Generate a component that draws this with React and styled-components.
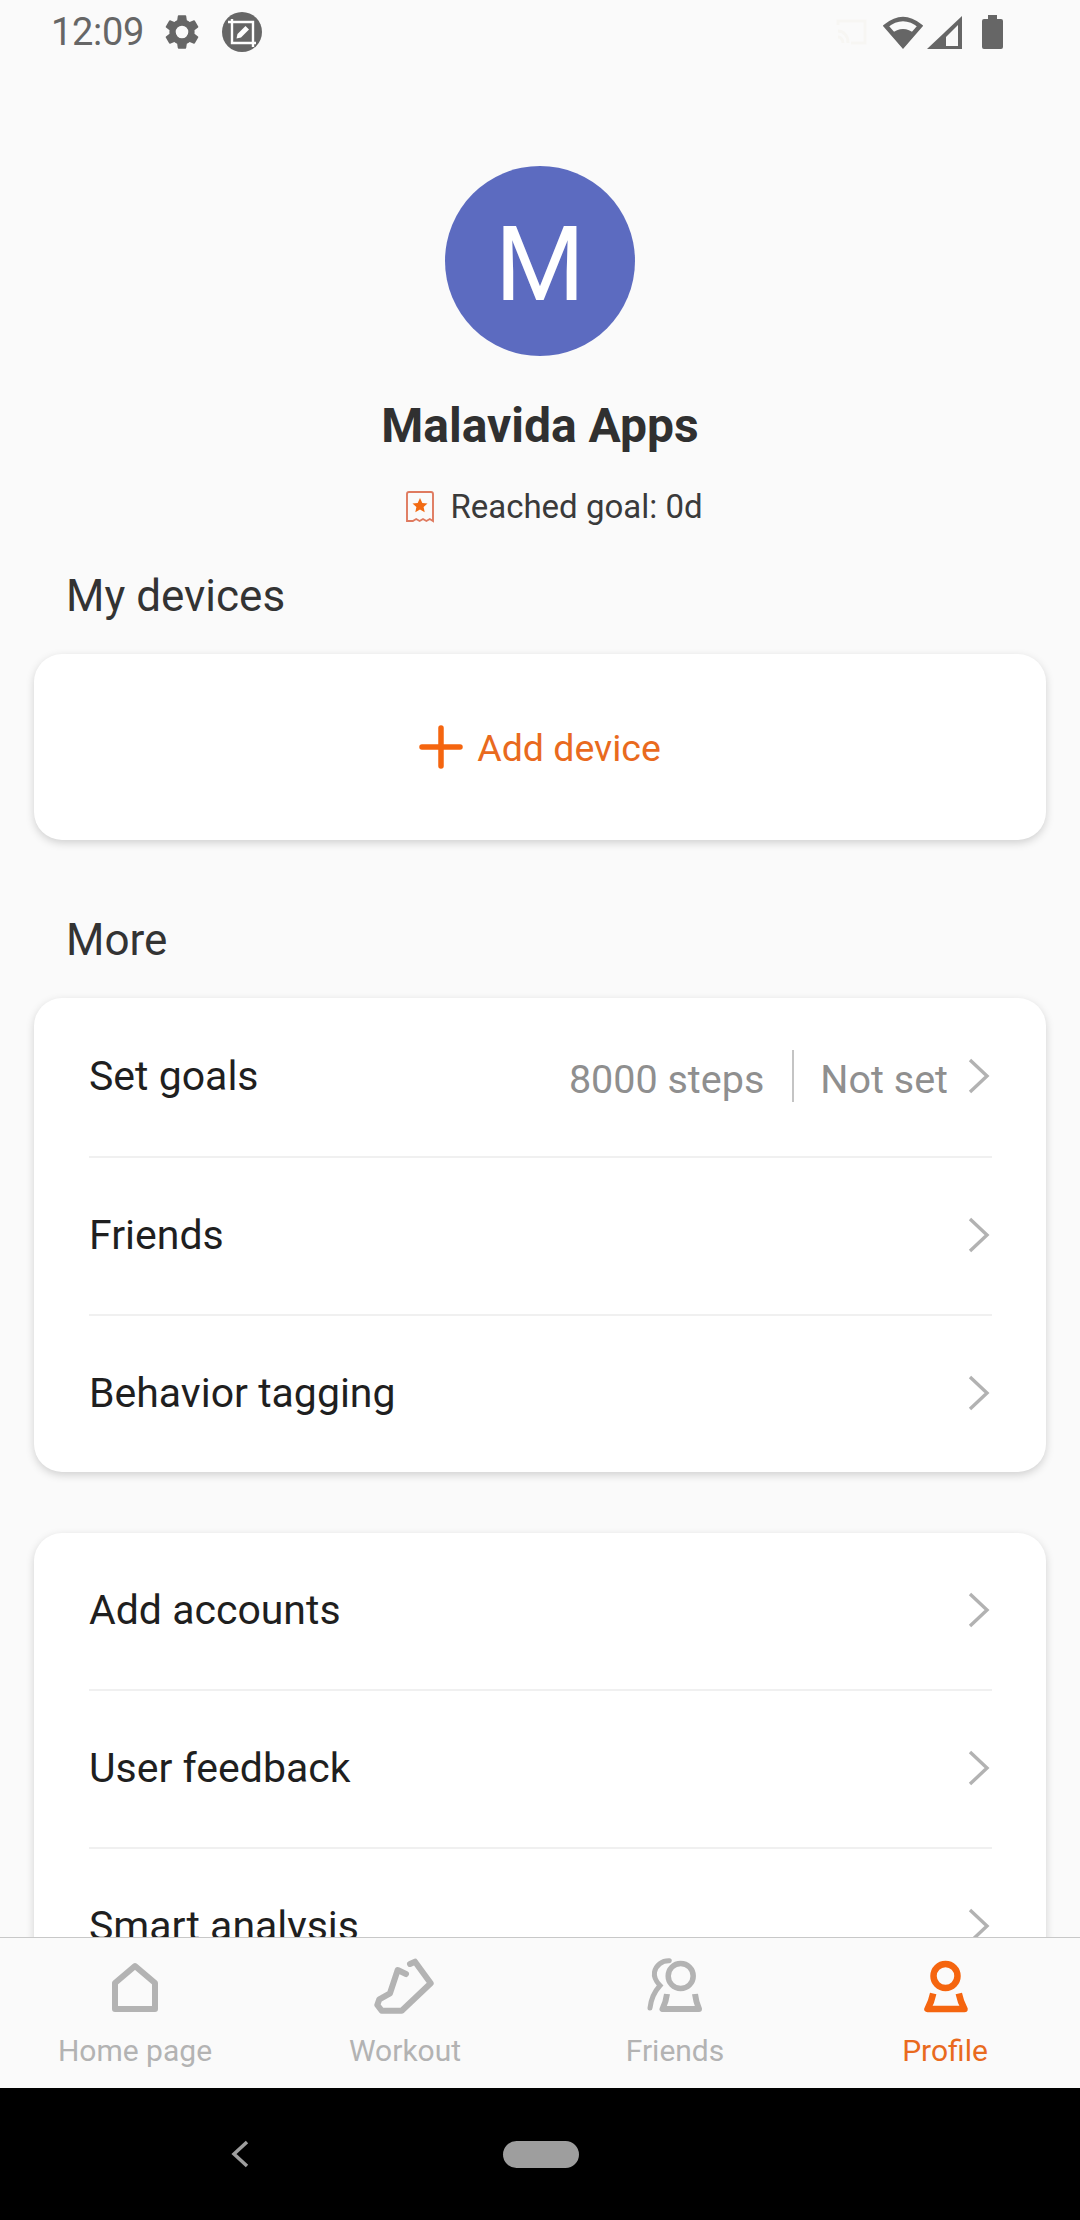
import React from "react";
import styled, { createGlobalStyle } from "styled-components";

const GlobalStyle = createGlobalStyle`
  html, body { margin: 0; padding: 0; background: #fafafa; }
  * { box-sizing: border-box; }
`;

const Screen = styled.div`
  width: 1080px;
  height: 2220px;
  display: flex;
  flex-direction: column;
  overflow: hidden;
  background: #fafafa;
  font-family: Roboto, "Liberation Sans", sans-serif;
  color: #1f1f1f;
`;

const StatusBar = styled.div`
  height: 66px;
  flex: none;
  display: flex;
  align-items: center;
  padding: 0 77px 2px 51px;
  color: #666;
`;
const Clock = styled.span`
  font-size: 38px;
  line-height: 1;
  width: 110px;
  letter-spacing: -0.3px;
`;
const StatusLeft = styled.div`
  display: flex;
  align-items: center;
  gap: 19px;
`;
const StatusRight = styled.div`
  margin-left: auto;
  display: flex;
  align-items: center;
  gap: 4px;
`;
const CastSvg = styled.svg`
  margin-right: 11px;
`;
const BatterySvg = styled.svg`
  margin-left: 16px;
`;

const Content = styled.div`
  flex: 1;
  min-height: 0;
  overflow: hidden;
  padding: 100px 34px 0;
`;
const ProfileHead = styled.div`
  display: flex;
  flex-direction: column;
  align-items: center;
`;
const Avatar = styled.div`
  width: 190px;
  height: 190px;
  border-radius: 50%;
  background: #5c6bc0;
  color: #fff;
  font-size: 103px;
  line-height: 198px;
  text-align: center;
`;
const Name = styled.div`
  margin-top: 40px;
  font-size: 48px;
  line-height: 60px;
  font-weight: 700;
  color: #303030;
`;
const GoalRow = styled.div`
  margin-top: 30px;
  padding-left: 28px;
  display: flex;
  align-items: center;
  gap: 15px;
  font-size: 33px;
  line-height: 42px;
  color: #3a3a3a;
`;
const SectionTitle = styled.div`
  padding-left: 32px;
  font-size: 44px;
  line-height: 56px;
  color: #333;
  margin: ${(p) => p.$top}px 0 30px;
`;
const Card = styled.div`
  background: #fff;
  border-radius: 28px;
  box-shadow: 0 3px 9px rgba(0, 0, 0, 0.17);
`;
const AddCard = styled(Card)`
  height: 186px;
  display: flex;
  align-items: center;
  justify-content: center;
  gap: 14px;
  color: #e96a1e;
  font-size: 37.5px;
`;
const AddLabel = styled.span`
  padding-top: 2px;
`;
const ListCard = styled(Card)`
  padding: 0 54px 0 55px;
  margin-top: ${(p) => p.$top || 0}px;
  & > :first-child {
    height: ${(p) => p.$firstRow || 158}px;
  }
`;
const Row = styled.div`
  height: 158px;
  display: flex;
  align-items: center;
  padding-bottom: 2px;
  font-size: 41px;
  color: #1f1f1f;
  & + & {
    border-top: 2px solid #f0f0f0;
  }
`;
const RowValue = styled.div`
  margin-left: auto;
  display: flex;
  align-items: center;
  font-size: 39.5px;
  color: #8f8f8f;
`;
const ValueText = styled.span`
  padding-top: 6px;
`;
const ValueDivider = styled.span`
  width: 2px;
  height: 52px;
  background: #c4c4c4;
  margin: 0 26px 0 28px;
`;
const Chevron = styled.svg`
  flex: none;
  margin-left: ${(p) => (p.$inline ? "20px" : "auto")};
  margin-right: 2px;
`;

const TabBar = styled.div`
  height: 151px;
  flex: none;
  display: grid;
  grid-template-columns: repeat(4, 1fr);
  background: #fafafa;
  border-top: 1px solid #c8c8c8;
  position: relative;
`;
const Tab = styled.div`
  display: flex;
  flex-direction: column;
  align-items: center;
  padding-top: 20px;
  color: ${(p) => (p.$active ? "#e96a1e" : "#b3b3b3")};
  font-size: 30px;
`;
const TabIcon = styled.svg`
  display: block;
`;
const TabLabel = styled.span`
  margin-top: 14px;
  line-height: 38px;
`;

const NavBar = styled.div`
  height: 132px;
  flex: none;
  background: #000;
  display: flex;
  align-items: center;
  padding: 0 0 0 231px;
`;
const HomePill = styled.div`
  width: 76px;
  height: 27px;
  border-radius: 14px;
  background: #9e9e9e;
  margin-left: 254px;
`;

const GearIcon = () => (
  <svg width="42" height="42" viewBox="0 0 24 24" fill="#666">
    <path d="M19.14 12.94c.04-.3.06-.61.06-.94s-.02-.64-.07-.94l2.03-1.58a.49.49 0 0 0 .12-.61l-1.92-3.32a.49.49 0 0 0-.59-.22l-2.39.96a7 7 0 0 0-1.62-.94l-.36-2.54a.48.48 0 0 0-.48-.41h-3.84a.48.48 0 0 0-.47.41l-.36 2.54c-.59.24-1.13.57-1.62.94l-2.39-.96a.49.49 0 0 0-.59.22L2.74 8.87a.48.48 0 0 0 .12.61l2.03 1.58c-.05.3-.09.63-.09.94s.02.64.07.94l-2.03 1.58a.49.49 0 0 0-.12.61l1.92 3.32c.12.22.37.29.59.22l2.39-.96c.5.38 1.03.7 1.62.94l.36 2.54c.05.24.24.41.48.41h3.84c.24 0 .44-.17.47-.41l.36-2.54c.59-.24 1.13-.56 1.62-.94l2.39.96c.22.08.47 0 .59-.22l1.92-3.32a.48.48 0 0 0-.12-.61l-2.01-1.58zM12 15.6A3.6 3.6 0 1 1 12 8.4a3.6 3.6 0 0 1 0 7.2z" />
  </svg>
);

const ScreenshotEditIcon = () => (
  <svg width="40" height="40" viewBox="0 0 40 40">
    <circle cx="20" cy="20" r="20" fill="#666" />
    <path d="M10 7v24h24M6 10h25v25" fill="none" stroke="#fff" strokeWidth="2.4" />
    <path d="M14.5 26.5l1-4.5 8-8 3.5 3.5-8 8z" fill="#fff" />
  </svg>
);

const CastIcon = () => (
  <CastSvg width="33" height="28" viewBox="0 0 33 28">
    <path d="M3 7V3h27v22H16M3 13c6 0 10 5 10 12M3 19c3 0 5 3 5 6" fill="none" stroke="#f7f6f3" strokeWidth="3" />
  </CastSvg>
);

const WifiIcon = () => (
  <svg width="40" height="34" viewBox="0 0 40 34">
    <path d="M20 30.5L3 11Q20 -3 37 11z" fill="none" stroke="#666" strokeWidth="4.5" />
    <path d="M20 33L8 19Q20 9 32 19z" fill="#666" />
  </svg>
);

const SignalIcon = () => (
  <svg width="35" height="33" viewBox="0 0 35 33">
    <path d="M35 0v33H0z" fill="#666" />
    <path d="M31 9v21H19V21z" fill="#fafafa" />
  </svg>
);

const BatteryIcon = () => (
  <BatterySvg width="21" height="34" viewBox="0 0 21 34">
    <path d="M6 0h9v4h4a2 2 0 0 1 2 2v26a2 2 0 0 1-2 2H2a2 2 0 0 1-2-2V6a2 2 0 0 1 2-2h4z" fill="#666" />
  </BatterySvg>
);

const GoalIcon = () => (
  <svg width="30" height="34" viewBox="0 0 30 34">
    <path d="M2 4a2 2 0 0 1 2-2h22a2 2 0 0 1 2 2v27l-3.2-2-3.4 2-3.4-2-3.4 2-3.4-2-3.4 2L2 31z" fill="none" stroke="#df7a5f" strokeWidth="1.9" />
    <path d="M15 8l2.3 4.9 5.2.6-3.9 3.5 1.1 5.2-4.7-2.7-4.7 2.7 1.1-5.2-3.9-3.5 5.2-.6z" fill="#f26a12" />
  </svg>
);

const PlusIcon = () => (
  <svg width="44" height="44" viewBox="0 0 44 44">
    <path d="M22 3v38M3 22h38" stroke="#f5650f" strokeWidth="5.5" strokeLinecap="round" />
  </svg>
);

const ChevronIcon = ({ inline }) => (
  <Chevron $inline={inline} width="22" height="36" viewBox="0 0 22 36">
    <path d="M2 2l17 16L2 34" fill="none" stroke="#b2b2b2" strokeWidth="3.4" />
  </Chevron>
);

const HomeIcon = () => (
  <TabIcon width="64" height="60" viewBox="0 0 64 60">
    <path d="M32 8l20 17v26H12V25z" fill="none" stroke="#b3b3b3" strokeWidth="6" strokeLinejoin="round" />
  </TabIcon>
);

const ShoeIcon = () => (
  <TabIcon width="64" height="60" viewBox="0 0 64 60">
    <path
      d="M37 6l5-2.3L57.7 25.3 28.7 52.7H8.7L4.3 47l2-5.7L17 35.3 24.7 12 33 16"
      fill="none"
      stroke="#b3b3b3"
      strokeWidth="6"
      strokeLinejoin="round"
      strokeLinecap="round"
    />
  </TabIcon>
);

const FriendsIcon = () => (
  <TabIcon width="64" height="60" viewBox="0 0 64 60">
    <circle cx="37.7" cy="18" r="12.5" fill="none" stroke="#b3b3b3" strokeWidth="5.5" />
    <path d="M26.3 2.7C19 2.5 13 7 11.5 14c-.8 5 2 10 5.5 13.5C12 33 8 41 7 50" fill="none" stroke="#b3b3b3" strokeWidth="5" strokeLinecap="round" />
    <path d="M24 36Q23 44 19.5 51H56Q53 44 52 36" fill="none" stroke="#b3b3b3" strokeWidth="6" strokeLinejoin="round" />
  </TabIcon>
);

const ProfileIcon = () => (
  <TabIcon width="64" height="60" viewBox="0 0 64 60">
    <circle cx="32.5" cy="18" r="12" fill="none" stroke="#f5650f" strokeWidth="6.5" />
    <path d="M20.2 35.5Q18.5 44 14.5 51H51.5Q47.5 44 45.8 35.5" fill="none" stroke="#f5650f" strokeWidth="6.5" strokeLinejoin="round" />
  </TabIcon>
);

const BackIcon = () => (
  <svg width="18" height="28" viewBox="0 0 18 28">
    <path d="M16 2L3 14l13 12" fill="none" stroke="#9e9e9e" strokeWidth="3.5" />
  </svg>
);

const tabs = [
  { label: "Home page", Icon: HomeIcon },
  { label: "Workout", Icon: ShoeIcon },
  { label: "Friends", Icon: FriendsIcon },
  { label: "Profile", Icon: ProfileIcon, active: true },
];

export default function App() {
  return (
    <Screen>
      <GlobalStyle />
      <StatusBar>
        <Clock>12:09</Clock>
        <StatusLeft>
          <GearIcon />
          <ScreenshotEditIcon />
        </StatusLeft>
        <StatusRight>
          <CastIcon />
          <WifiIcon />
          <SignalIcon />
          <BatteryIcon />
        </StatusRight>
      </StatusBar>

      <Content>
        <ProfileHead>
          <Avatar>M</Avatar>
          <Name>Malavida Apps</Name>
          <GoalRow>
            <GoalIcon />
            Reached goal: 0d
          </GoalRow>
        </ProfileHead>

        <SectionTitle $top={40}>My devices</SectionTitle>
        <AddCard>
          <PlusIcon />
          <AddLabel>Add device</AddLabel>
        </AddCard>

        <SectionTitle $top={72}>More</SectionTitle>
        <ListCard>
          <Row>
            Set goals
            <RowValue>
              <ValueText>8000 steps</ValueText>
              <ValueDivider />
              <ValueText>Not set</ValueText>
              <ChevronIcon inline />
            </RowValue>
          </Row>
          <Row>
            Friends
            <ChevronIcon />
          </Row>
          <Row>
            Behavior tagging
            <ChevronIcon />
          </Row>
        </ListCard>

        <ListCard $top={61} $firstRow={156}>
          <Row>
            Add accounts
            <ChevronIcon />
          </Row>
          <Row>
            User feedback
            <ChevronIcon />
          </Row>
          <Row>
            Smart analysis
            <ChevronIcon />
          </Row>
        </ListCard>
      </Content>

      <TabBar>
        {tabs.map(({ label, Icon, active }) => (
          <Tab key={label} $active={active}>
            <Icon />
            <TabLabel>{label}</TabLabel>
          </Tab>
        ))}
      </TabBar>

      <NavBar>
        <BackIcon />
        <HomePill />
      </NavBar>
    </Screen>
  );
}
